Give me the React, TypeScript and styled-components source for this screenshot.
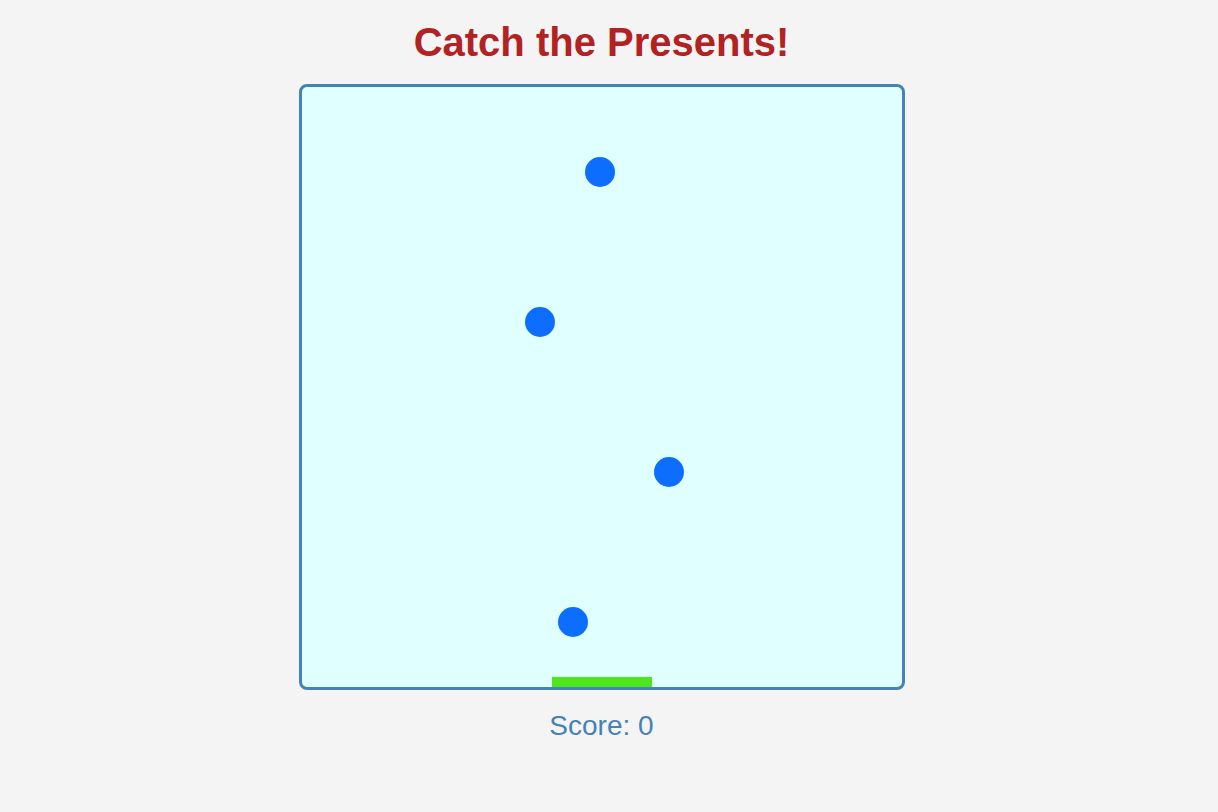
import React from 'react';
import styled, { createGlobalStyle } from 'styled-components';

const GlobalStyle = createGlobalStyle`
  html, body {
    margin: 0;
    padding: 0;
    background-color: #f4f4f4;
    font-family: "Liberation Sans", Arial, sans-serif;
  }
`;

const Page = styled.div`
  display: flex;
  flex-direction: column;
  align-items: center;
  padding: 19px 15px 0 0;
`;

const Title = styled.h1`
  margin: 0 0 19px;
  font-size: 40px;
  line-height: 46px;
  font-weight: bold;
  color: #b22222;
`;

const Board = styled.div`
  position: relative;
  width: 600px;
  height: 600px;
  background-color: #e0ffff;
  border: 3px solid #4682b4;
  border-radius: 8px;
  overflow: hidden;
`;

const Present = styled.div`
  position: absolute;
  width: 30px;
  height: 30px;
  border-radius: 50%;
  background-color: #0d6efd;
`;

const Paddle = styled.div`
  position: absolute;
  bottom: 0;
  width: 100px;
  height: 10px;
  background-color: #4ee61a;
`;

const Score = styled.div`
  margin-top: 20px;
  font-size: 28px;
  line-height: 32px;
  color: #4682b4;
`;

// present centres in board coordinates
const presents = [
  { x: 298, y: 85 },
  { x: 238, y: 235 },
  { x: 367, y: 385 },
  { x: 271, y: 535 },
];

const paddleX = 250;

export default function App() {
  return (
    <>
      <GlobalStyle />
      <Page>
        <Title>Catch the Presents!</Title>
        <Board>
          {presents.map((p, i) => (
            <Present key={i} style={{ left: p.x - 15, top: p.y - 15 }} />
          ))}
          <Paddle style={{ left: paddleX }} />
        </Board>
        <Score>Score: 0</Score>
      </Page>
    </>
  );
}
